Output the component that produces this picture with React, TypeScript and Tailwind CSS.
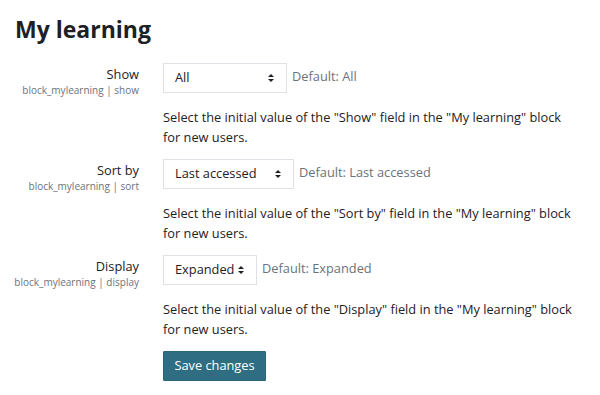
// Moodle-style admin settings page: "My learning" block defaults.
const font = { fontFamily: '"Open Sans", "Noto Sans", sans-serif' };

type Setting = {
  label: string;
  id: string;
  value: string;
  width: string;
  field: string;
};

const settings: Setting[] = [
  { label: "Show", id: "block_mylearning | show", value: "All", width: "w-[124px]", field: "Show" },
  { label: "Sort by", id: "block_mylearning | sort", value: "Last accessed", width: "w-[131px]", field: "Sort by" },
  { label: "Display", id: "block_mylearning | display", value: "Expanded", width: "w-[94px]", field: "Display" },
];

function Caret() {
  return (
    <svg width="8" height="10" viewBox="0 0 8 10" className="shrink-0">
      <path d="M4 1 L7 4 H1 Z" fill="#1d2125" />
      <path d="M4 9 L7 6 H1 Z" fill="#1d2125" />
    </svg>
  );
}

function SettingRow({ s }: { s: Setting }) {
  const help = `Select the initial value of the "${s.field}" field in the "My learning" block for new users.`;
  return (
    <div className="flex">
      {/* label column */}
      <div className="w-[139px] shrink-0 text-right pt-[2px]">
        <div className="text-[12.8px] leading-[18px] text-[#1d2125]">{s.label}</div>
        <div className="text-[10px] leading-[14px] text-[#6a737b]">{s.id}</div>
      </div>

      {/* control column */}
      <div className="ml-[24px] flex flex-col">
        <div className="flex items-center gap-[5px]">
          <div
            className={`${s.width} h-[30px] border border-[#dee2e6] bg-white flex items-center justify-between pl-[11px] pr-[11px]`}
          >
            <span className="text-[12.8px] text-[#1d2125]">{s.value}</span>
            <Caret />
          </div>
          <span className="text-[12.8px] text-[#6a737b] -mt-[2px]">{`Default: ${s.value}`}</span>
        </div>
        <p className="mt-[14px] w-[410px] text-[12.8px] leading-[20px] text-[#1d2125]">{help}</p>
      </div>
    </div>
  );
}

export default function App() {
  return (
    <div className="w-[600px] h-[395px] bg-white pl-[15px] pt-[13px] overflow-hidden" style={font}>
      <h2 className="text-[23px] font-bold leading-[32px] text-[#1d2125]">My learning</h2>
      <div className="-ml-[15px] mt-[18px] flex flex-col gap-[12px]">
        {settings.map((s) => (
          <SettingRow key={s.id} s={s} />
        ))}
        <div className="ml-[163px]">
          <button
            type="button"
            className="h-[30px] w-[103px] bg-[#2f6e82] text-white text-[12.8px] border border-[#2a6376] rounded-[1px]"
          >
            Save changes
          </button>
        </div>
      </div>
    </div>
  );
}
